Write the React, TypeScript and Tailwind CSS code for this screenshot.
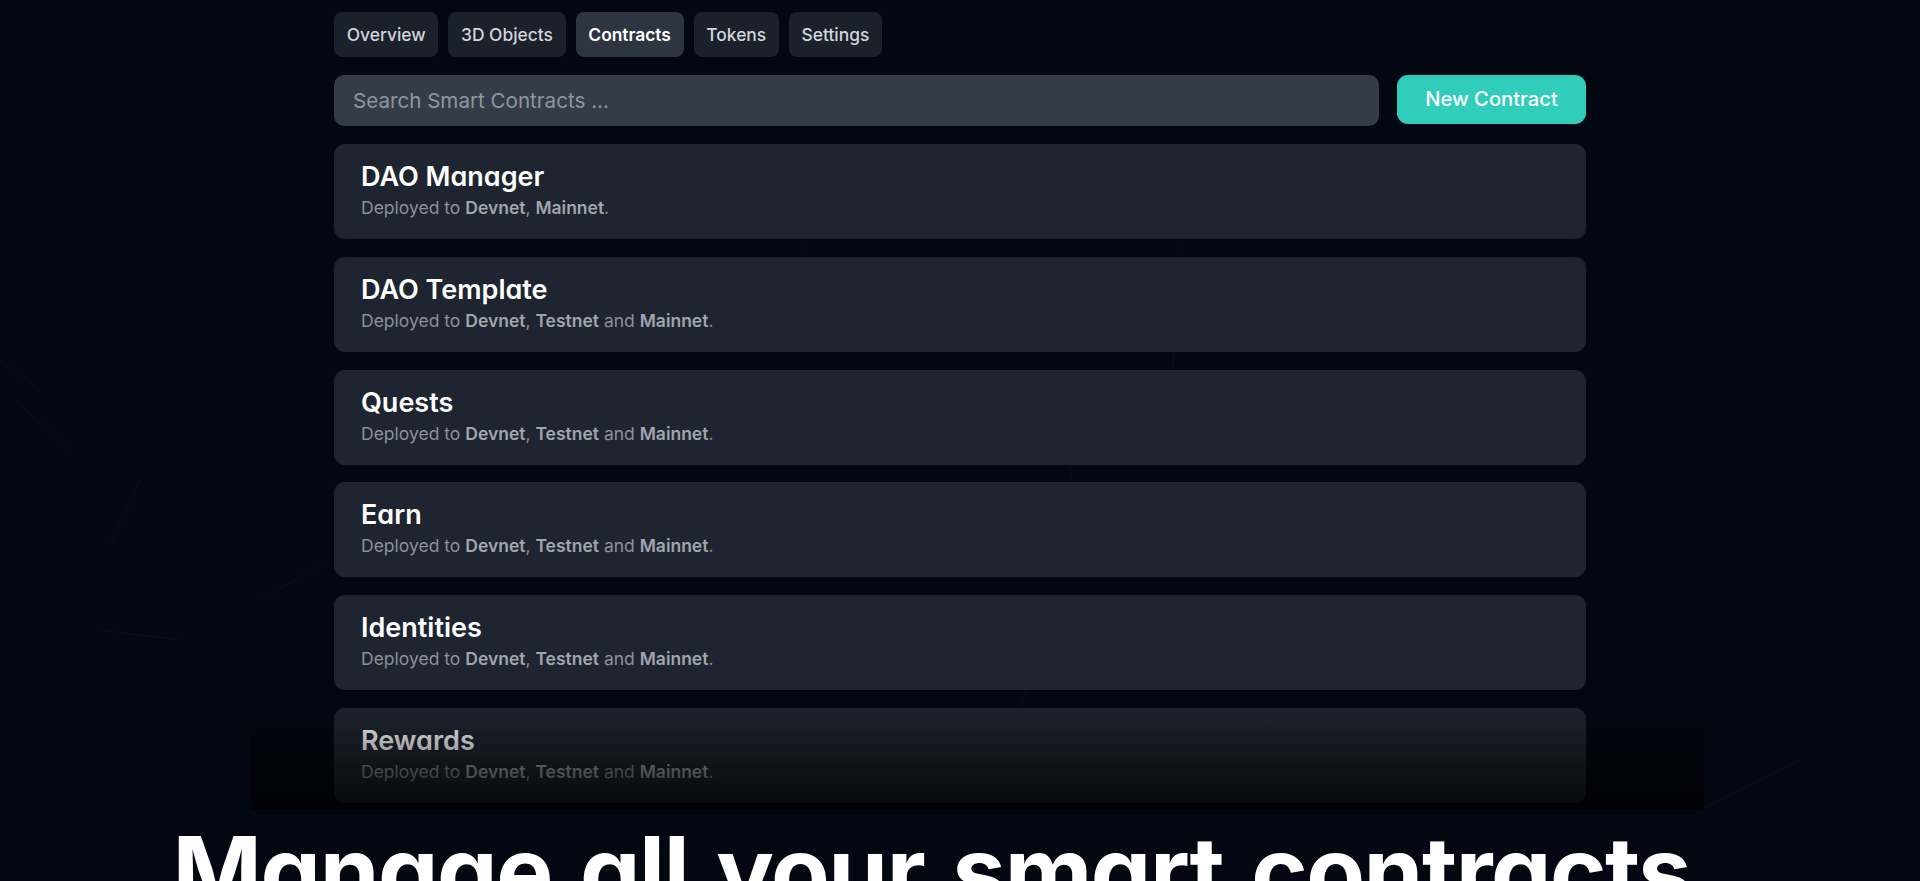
const tabs = ["Overview", "3D Objects", "Contracts", "Tokens", "Settings"];

const contracts = [
  { name: "DAO Manager", nets: ["Devnet", "Mainnet"] },
  { name: "DAO Template", nets: ["Devnet", "Testnet", "Mainnet"] },
  { name: "Quests", nets: ["Devnet", "Testnet", "Mainnet"] },
  { name: "Earn", nets: ["Devnet", "Testnet", "Mainnet"] },
  { name: "Identities", nets: ["Devnet", "Testnet", "Mainnet"] },
  { name: "Rewards", nets: ["Devnet", "Testnet", "Mainnet"] },
];

function Deployed({ nets }: { nets: string[] }) {
  return (
    <p className="mt-[1px] text-[17.5px] leading-[24px] text-[#8b909a]">
      Deployed to <b className="font-semibold text-[#a0a5ae]">Devnet</b>,{" "}
      {nets.length === 2 ? (
        <b className="font-semibold text-[#a0a5ae]">Mainnet</b>
      ) : (
        <>
          <b className="font-semibold text-[#a0a5ae]">Testnet</b> and{" "}
          <b className="font-semibold text-[#a0a5ae]">Mainnet</b>
        </>
      )}
      .
    </p>
  );
}

export default function App() {
  return (
    <main className="relative h-[881px] overflow-hidden bg-[#030712] font-['Inter',sans-serif] text-white">
      {/* Faint web lines behind the panel */}
      <svg className="absolute inset-0 h-full w-full" viewBox="0 0 1920 881" fill="none" stroke="#ffffff" strokeOpacity="0.03">
        <path d="M15 400 L70 450 M0 360 L40 390 M110 545 L140 480 M100 630 L180 640 M260 600 L330 560 M1000 760 L1030 680 M1700 810 L1800 760 M800 150 L805 280 M1180 240 L1170 420 M1070 460 L1075 560" />
      </svg>

      <div className="relative mx-auto w-[1252px] pt-[12px]">
        <nav className="flex gap-[10px]">
          {tabs.map((tab) => (
            <a
              key={tab}
              className={
                tab === "Contracts"
                  ? "flex h-[45px] items-center rounded-[8px] bg-[#2d3541] px-[12.7px] pt-[1px] text-[17.4px] font-semibold text-white"
                  : "flex h-[45px] items-center rounded-[8px] bg-[#1b212b] px-[12.7px] pt-[1px] text-[17.4px] font-medium text-[#d1d5db]"
              }
            >
              {tab}
            </a>
          ))}
        </nav>

        <div className="mt-[18px] flex items-start gap-[18px]">
          <div className="flex h-[51px] flex-1 items-center rounded-[10px] bg-[#343c4a] px-[19px] pt-[1px] text-[20.6px] text-[#8f95a0]">
            Search Smart Contracts ...
          </div>
          <button className="h-[49px] w-[189px] rounded-[11px] bg-[#31cdbb] text-[20.2px] font-medium text-white">
            New Contract
          </button>
        </div>

        <ul className="mt-[18px] flex flex-col gap-[17.8px]">
          {contracts.map((contract) => (
            <li key={contract.name} className="h-[95px] rounded-[11px] bg-[#1e2530] px-[27px] pt-[15px]">
              <h3 className="text-[27px] font-semibold leading-[36px] [font-feature-settings:'cv11']">{contract.name}</h3>
              <Deployed nets={contract.nets} />
            </li>
          ))}
        </ul>
      </div>

      {/* Fade over the last rows */}
      <div className="absolute left-[250px] top-[700px] h-[110px] w-[1454px] bg-gradient-to-b from-transparent to-black/80" />

      <h1 className="relative mt-[13px] w-[1863px] whitespace-nowrap text-center text-[96px] font-bold leading-[110px] tracking-[-0.015em] [font-feature-settings:'cv11'] [word-spacing:0.07em]">
        Manage all your smart contracts
      </h1>
    </main>
  );
}
